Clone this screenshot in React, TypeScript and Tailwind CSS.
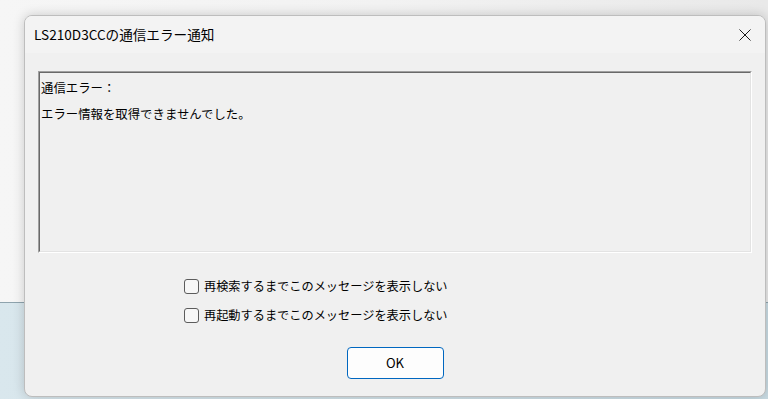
import { useState, type FC } from 'react';

const font = { fontFamily: '"Noto Sans CJK JP", "Noto Sans", sans-serif' };

interface CheckRowProps {
  label: string;
  checked: boolean;
  onToggle: () => void;
}

const CheckRow: FC<CheckRowProps> = ({ label, checked, onToggle }) => (
  <label className="flex h-[20px] items-center gap-[5px] cursor-default select-none" onClick={onToggle}>
    <span className="flex h-[15px] w-[15px] items-center justify-center rounded-[3px] border border-[#5c5c5c] bg-[#f7f7f7]">
      {checked && (
        <svg width="10" height="10" viewBox="0 0 10 10" fill="none">
          <path d="M1.5 5.2 L4 7.6 L8.6 2.4" stroke="#1a1a1a" strokeWidth="1.2" />
        </svg>
      )}
    </span>
    <span className="text-[12.2px] leading-[20px] text-black">{label}</span>
  </label>
);

const App: FC = () => {
  const [noSearch, setNoSearch] = useState(false);
  const [noRestart, setNoRestart] = useState(false);

  return (
    <div className="relative h-[399px] w-[768px] overflow-hidden" style={font}>
      {/* desktop behind */}
      <div className="flex h-full flex-col">
        <div className="h-[303px] bg-gradient-to-r from-[#f6f6f6] via-[#f2f2f2] to-[#e9e9e9] border-b border-[#8ea3ad]" />
        <div className="flex-1 bg-gradient-to-r from-[#d9e7ed] to-[#c9dbe3]" />
      </div>

      {/* dialog window */}
      <div className="absolute left-[24px] top-[15px] flex h-[382px] w-[742px] flex-col overflow-hidden rounded-[8px] border border-[#bdbdbd] bg-[#f0f0f0] shadow-[0_0_12px_rgba(0,0,0,0.18)]">
        <div className="flex h-[37px] shrink-0 items-center justify-between bg-[#f3f3f3] pl-[9px] pr-[14px]">
          <span className="text-[13.6px] text-black">LS210D3CCの通信エラー通知</span>
          <svg width="12" height="12" viewBox="0 0 12 12" fill="none">
            <path d="M0.5 0.5 L11.5 11.5 M11.5 0.5 L0.5 11.5" stroke="#1a1a1a" strokeWidth="1" />
          </svg>
        </div>

        <div className="flex flex-col px-[13px] pt-[18px]">
          <div className="h-[182px] w-[714px] border-l border-t border-[#a0a0a0] border-b border-r border-b-white border-r-white">
            <div className="h-full w-full border-l border-t border-[#696969] border-b border-r border-b-[#e3e3e3] border-r-[#e3e3e3] pl-[1px] pt-[2px] text-[12.4px] leading-[26px] text-black">
              <div>通信エラー：</div>
              <div>エラー情報を取得できませんでした。</div>
            </div>
          </div>

          <div className="ml-[146px] mt-[23px] flex flex-col gap-[9px]">
            <CheckRow label="再検索するまでこのメッセージを表示しない" checked={noSearch} onToggle={() => setNoSearch(v => !v)} />
            <CheckRow label="再起動するまでこのメッセージを表示しない" checked={noRestart} onToggle={() => setNoRestart(v => !v)} />
          </div>

          <div className="mt-[22px] flex justify-center">
            <button className="h-[32px] w-[97px] rounded-[4px] border border-[#0067c0] bg-[#fdfdfd] text-[13px] text-black">
              OK
            </button>
          </div>
        </div>
      </div>
    </div>
  );
};

export default App;
